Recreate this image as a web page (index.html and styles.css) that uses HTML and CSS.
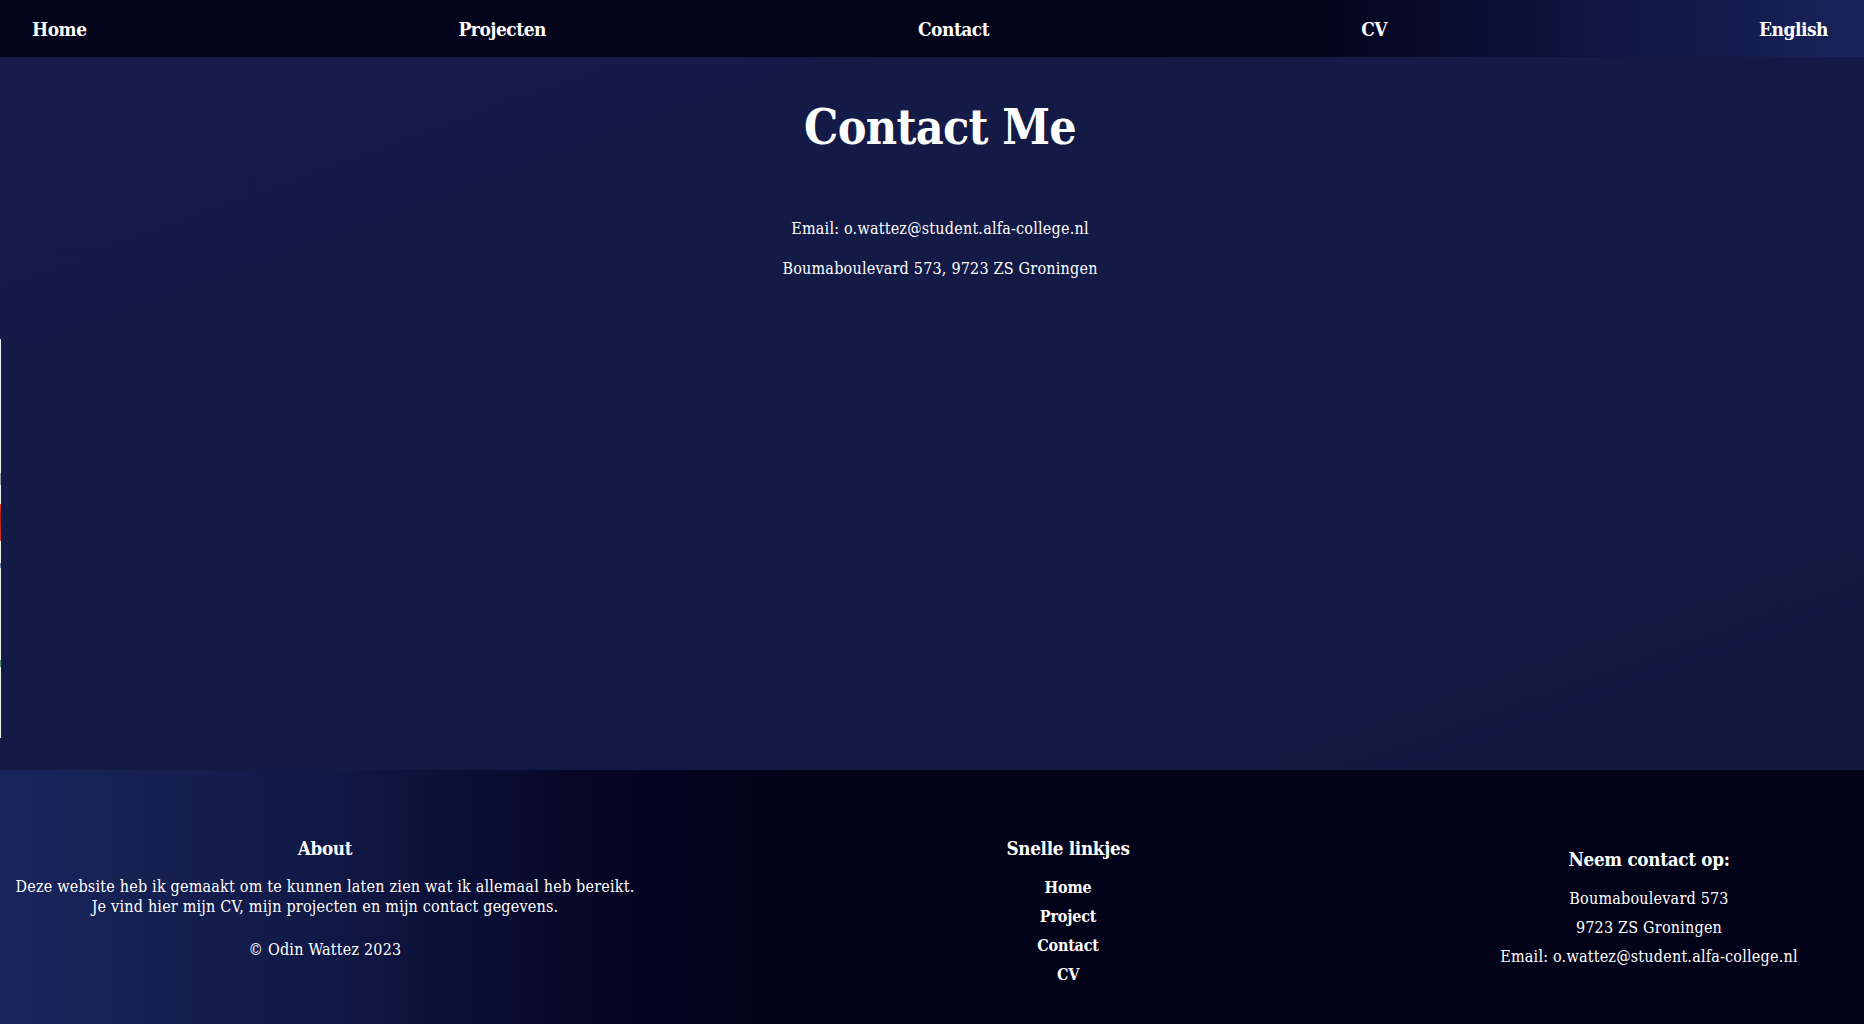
FILE: index.html
```html
<!DOCTYPE html>
<html lang="nl">
<head>
<meta charset="utf-8">
<title>Contact</title>
<link rel="stylesheet" href="styles.css">
</head>
<body>
<nav class="topnav">
  <a href="#" class="nav-link">Home</a>
  <a href="#" class="nav-link">Projecten</a>
  <a href="#" class="nav-link">Contact</a>
  <a href="#" class="nav-link">CV</a>
  <a href="#" class="nav-link">English</a>
</nav>
<main class="main">
  <h1 class="title">Contact Me</h1>
  <p class="info first">Email: o.wattez@student.alfa-college.nl</p>
  <p class="info">Boumaboulevard 573, 9723 ZS Groningen</p>
  <div class="map-edge"></div>
</main>
<footer class="footer">
  <section class="col about">
    <h3 class="col-title">About</h3>
    <p class="about-text">Deze website heb ik gemaakt om te kunnen laten zien wat ik allemaal heb bereikt.<br>Je vind hier mijn CV, mijn projecten en mijn contact gegevens.</p>
    <p class="copy">© Odin Wattez 2023</p>
  </section>
  <section class="col links">
    <h3 class="col-title">Snelle linkjes</h3>
    <ul class="link-list">
      <li><a href="#">Home</a></li>
      <li><a href="#">Project</a></li>
      <li><a href="#">Contact</a></li>
      <li><a href="#">CV</a></li>
    </ul>
  </section>
  <section class="col contact">
    <h3 class="col-title big">Neem contact op:</h3>
    <p class="line">Boumaboulevard 573</p>
    <p class="line">9723 ZS Groningen</p>
    <p class="line">Email: o.wattez@student.alfa-college.nl</p>
  </section>
</footer>
</body>
</html>
```
FILE: styles.css
```css
* { box-sizing: border-box; }
html, body {
  margin: 0;
  padding: 0;
}
body {
  width: 1864px;
  height: 1024px;
  overflow: hidden;
  font-family: "DejaVu Serif Condensed", "DejaVu Serif", "Liberation Serif", serif;
  font-stretch: condensed;
  color: #ffffff;
  background: #131a45;
}
a { color: #ffffff; text-decoration: none; }

.topnav {
  height: 57px;
  display: flex;
  align-items: center;
  justify-content: space-between;
  padding: 2px 36px 0 32px;
  background: linear-gradient(90deg, #03031a 0%, #03031a 70%, #0f1643 86%, #18235a 100%);
}
.nav-link {
  font-size: 19px;
  font-weight: bold;
  line-height: 23px;
  letter-spacing: -0.5px;
}

.main {
  position: relative;
  height: 713px;
  padding: 42px 0 0 16px;
  text-align: center;
  background: linear-gradient(160deg, #141b49 0%, #131a45 50%, #11173f 100%);
}
.title {
  margin: 0;
  font-size: 48px;
  line-height: 56px;
  font-weight: bold;
  letter-spacing: -0.7px;
}
.info {
  margin: 16px 0 0;
  font-size: 16px;
  line-height: 24px;
  letter-spacing: 0.2px;
}
.info.first { margin-top: 62px; }

.map-edge {
  position: absolute;
  left: 0;
  top: 282px;
  width: 1px;
  height: 399px;
  background: linear-gradient(180deg,
    #f2f2f2 0px, #f2f2f2 134px,
    #9aa6a8 134px, #9aa6a8 146px,
    #f0f0f0 146px, #f0f0f0 165px,
    #e03a2c 165px, #b01818 178px, #e03a2c 202px,
    #f0f0f0 202px, #f0f0f0 224px,
    #6c86a8 224px, #6c86a8 229px,
    #f0f0f0 229px, #f0f0f0 321px,
    #4c9a7c 321px, #4c9a7c 328px,
    #f2f2f2 328px, #f2f2f2 399px);
}

.footer {
  height: 254px;
  display: grid;
  grid-template-columns: 650px 836px 326px;
  align-items: start;
  padding: 67px 52px 0 0;
  text-align: center;
  background: linear-gradient(90deg, #19255c 0%, #101845 18%, #060626 32%, #020219 42%, #020219 100%);
}
.col-title {
  margin: 0;
  font-size: 18.72px;
  line-height: 22px;
  font-weight: bold;
  letter-spacing: -0.3px;
}
.col-title.big {
  line-height: 25px;
}
.about-text {
  margin: 18px 0 0;
  font-size: 16px;
  line-height: 20px;
  white-space: nowrap;
  letter-spacing: 0.2px;
}
.copy {
  margin: 23px 0 0;
  font-size: 16px;
  line-height: 20px;
  letter-spacing: 0.2px;
}
.link-list {
  list-style: none;
  margin: 14px 0 0;
  padding: 0;
}
.link-list li {
  font-size: 16px;
  line-height: 29px;
  font-weight: bold;
  letter-spacing: -0.2px;
}
.contact { margin-top: 10px; }
.contact .col-title { margin-bottom: 12px; }
.line {
  margin: 0;
  font-size: 16px;
  line-height: 29px;
  white-space: nowrap;
  letter-spacing: 0.2px;
}
```
